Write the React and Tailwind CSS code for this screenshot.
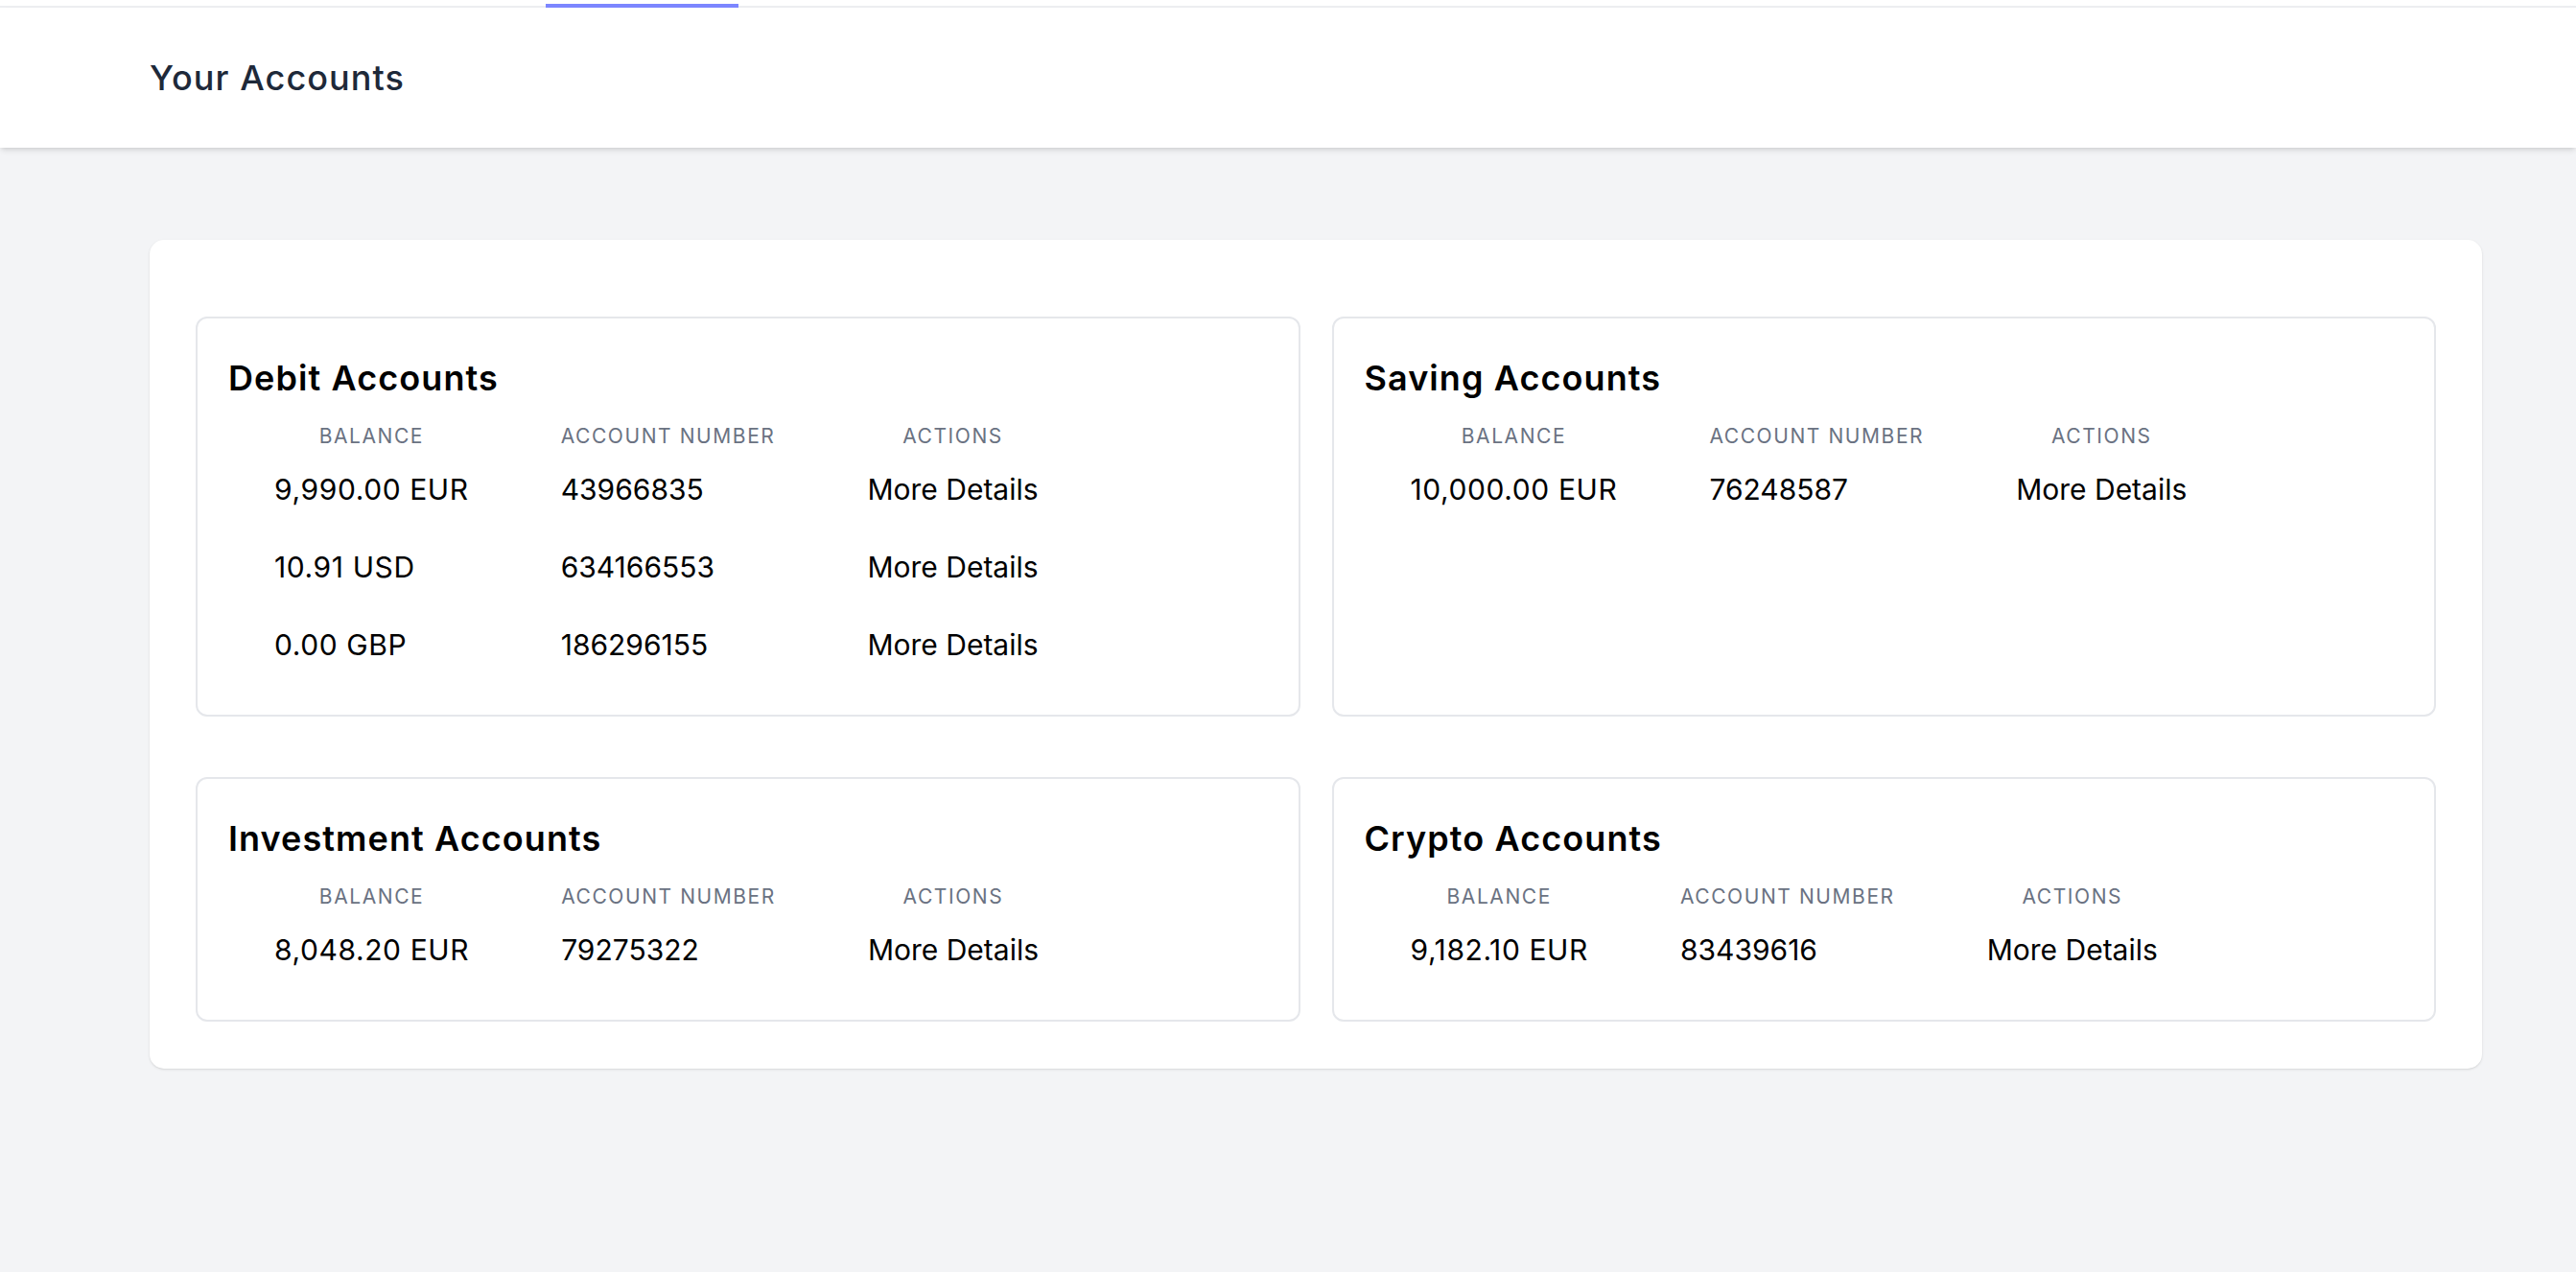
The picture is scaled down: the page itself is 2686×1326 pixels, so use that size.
import React from 'react'

const groups = [
    {
        title: 'Debit Accounts',
        rows: [
            { balance: '9,990.00 EUR', number: '43966835' },
            { balance: '10.91 USD', number: '634166553' },
            { balance: '0.00 GBP', number: '186296155' },
        ],
    },
    {
        title: 'Saving Accounts',
        rows: [{ balance: '10,000.00 EUR', number: '76248587' }],
    },
    {
        title: 'Investment Accounts',
        rows: [{ balance: '8,048.20 EUR', number: '79275322' }],
    },
    {
        title: 'Crypto Accounts',
        rows: [{ balance: '9,182.10 EUR', number: '83439616' }],
    },
]

function AccountCard({ title, rows }) {
    return (
        <div className="bg-white border-2 border-gray-200 rounded-xl px-8 pt-[38px] pb-[32px]">
            <h2 className="text-[36px] leading-[48px] font-semibold tracking-[0.03em] text-black mb-[22px]">{title}</h2>
            <table className="border-collapse">
                <thead>
                    <tr>
                        <th className="px-12 py-0 text-[21px] leading-[30px] font-normal uppercase tracking-[0.075em] text-gray-500 text-center">Balance</th>
                        <th className="px-12 py-0 text-[21px] leading-[30px] font-normal uppercase tracking-[0.075em] text-gray-500 text-center">Account Number</th>
                        <th className="px-12 py-0 text-[21px] leading-[30px] font-normal uppercase tracking-[0.075em] text-gray-500 text-center">Actions</th>
                    </tr>
                </thead>
                <tbody>
                    {rows.map((r) => (
                        <tr key={r.number}>
                            <td className="px-12 py-[19px] text-[30px] leading-[43px] tracking-[0.02em] text-black whitespace-nowrap">{r.balance}</td>
                            <td className="px-12 py-[19px] text-[30px] leading-[43px] text-black whitespace-nowrap">{r.number}</td>
                            <td className="px-12 py-[19px] text-[30px] leading-[43px] text-black whitespace-nowrap text-center">More Details</td>
                        </tr>
                    ))}
                </tbody>
            </table>
        </div>
    )
}

export default function App() {
    return (
        <div className="min-h-screen bg-gray-100" style={{ fontFamily: 'Inter, "Noto Sans", sans-serif' }}>
            <div className="bg-white border-b-2 border-gray-200/70 h-[8px] flex">
                <div className="ml-[569px] w-[201px] h-[8px] border-b-4 border-indigo-400 shrink-0" />
            </div>
            <header className="bg-white shadow-md">
                <h1 className="pl-[156px] py-[49px] text-[36px] leading-[48px] font-medium tracking-[0.03em] text-gray-800">Your Accounts</h1>
            </header>
            <main className="pt-24 pb-24">
                <div className="ml-[156px] w-[2432px] bg-white rounded-[15px] shadow-sm px-12 pt-20 pb-[49px]">
                    <div className="grid grid-cols-2 gap-x-[33px] gap-y-[63px]">
                        {groups.map((g) => (
                            <AccountCard key={g.title} title={g.title} rows={g.rows} />
                        ))}
                    </div>
                </div>
            </main>
        </div>
    )
}
